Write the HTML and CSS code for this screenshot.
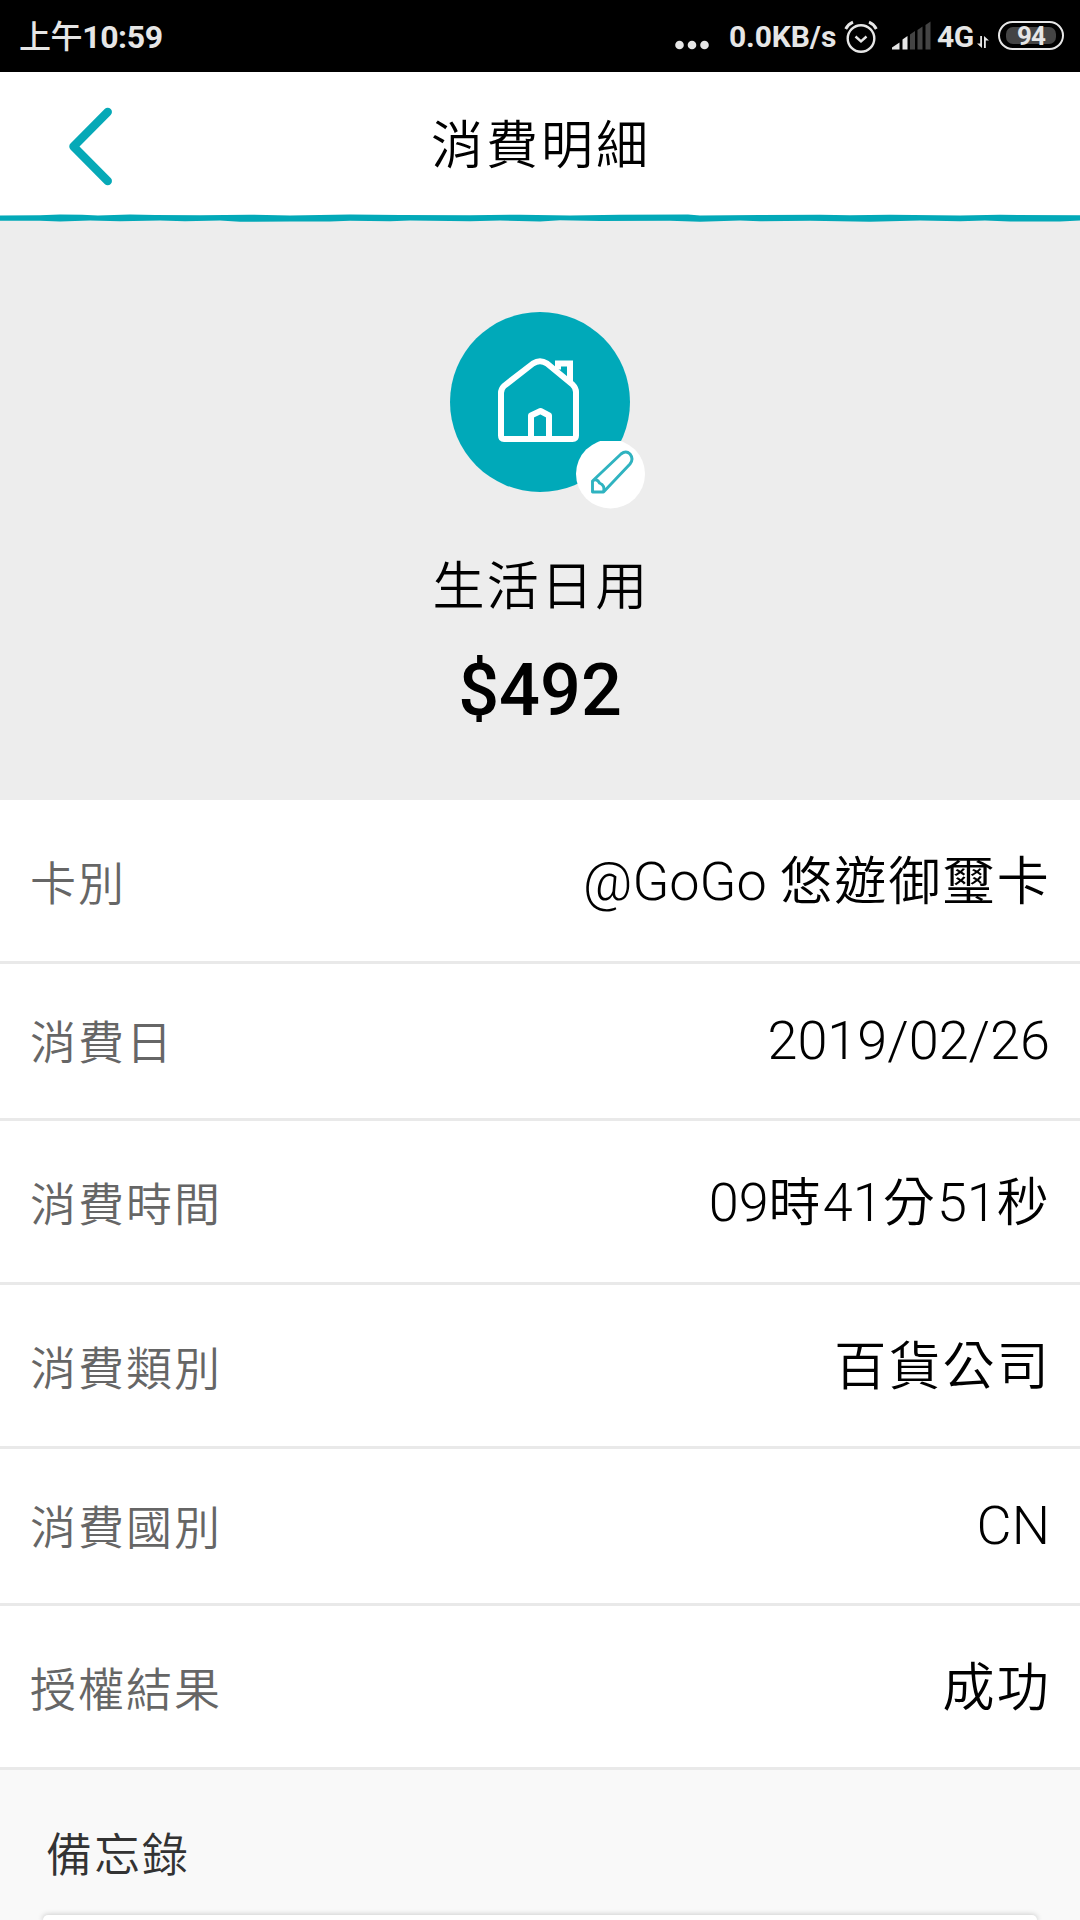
FILE: index.html
```html
<!DOCTYPE html>
<html lang="zh-Hant">
<head>
<meta charset="utf-8">
<title>消費明細</title>
<link rel="stylesheet" href="styles.css">
</head>
<body>
<div class="status">
  <span class="clock"><span class="meridiem">上午</span>10:59</span>
  <div class="status-right">
    <svg class="dots" width="34" height="10" viewBox="0 0 34 10"><circle cx="4.5" cy="5" r="4.3"/><circle cx="17" cy="5" r="4.3"/><circle cx="29.5" cy="5" r="4.3"/></svg>
    <span class="speed">0.0KB/s</span>
    <svg class="alarm" width="34" height="34" viewBox="0 0 34 34" fill="none" stroke="#e6e6e6"><circle cx="17" cy="18.5" r="13.3" stroke-width="2.4"/><path d="M11.5 16.5l5.5 5 5.500-5" stroke-width="2.4"/><path d="M1.700 9Q4.500 4 9 2.200M32.300 9Q29.500 4 25 2.200" stroke-width="3"/></svg>
    <svg class="signal" width="40" height="30" viewBox="0 0 40 30"><path d="M1 28.500V26.500L8.500 21.500V28.500z"/><path d="M11.500 18.500 16.500 15V28.500H11.500z"/><g fill="#444"><path d="M19 13.500 24 10V28.500H19z"/><path d="M26.500 9 31.500 5.500V28.500H26.500z"/><path d="M34.500 4 39.500 .5V28.500H34.500z"/></g></svg>
    <span class="network">4G</span>
    <svg class="updown" width="12" height="12" viewBox="0 0 12 12"><path d="M3.200 0H5V12L0 7.500H3.200zM7 12V0L12 4.500H8.800V12z"/></svg>
    <span class="battery"><span class="battery-level">94</span></span>
  </div>
</div>
<header class="header">
  <svg class="back" width="46" height="82" viewBox="0 0 46 82"><path d="M41.700 7 7.500 41.500 41.700 76" fill="none" stroke="#06a9b7" stroke-width="8.500" stroke-linecap="round" stroke-linejoin="round"/></svg>
  <h1 class="title">消費明細</h1>
</header>
<svg class="wave" width="1080" height="8" viewBox="0 0 1080 8"><path d="M0 1.500 40 1.300 60 .6 82 .8 98 1.500 130 .6 155 1 200 1.300 250 .7 290 1.400 350 .6 400 1 470 1.300 520 .7 570 1.500 620 .8 688 .6 700 1.500 760 1 820 .7 850 1.300 890 .8 960 1.400 1000 .8 1080 1.200V6.500L1060 7.600 1010 7.600 985 6.400 960 7.200 920 6.500 870 7.700 810 6.700 760 7.200 740 6.500 700 7.700 670 6.800 600 7 560 6.300 540 7.500 500 6.500 470 7.200 410 6.500 390 7.300 350 6.800 330 7.500 290 7.600 240 7.700 220 6.500 185 7.300 160 6.400 120 7.200 90 6.500 60 7.600 40 6.800 0 6.800z" fill="#03a9b8"/></svg>
<section class="hero">
  <div class="category">
    <svg class="house" width="180" height="180" viewBox="0 0 180 180" fill="none" stroke="#fff" stroke-width="6" stroke-linejoin="round"><circle cx="90" cy="90" r="90" fill="#00a9b9" stroke="none"/><path d="M54 127Q51 127 51 123.500V81Q51 77 54 74L83 51.500Q90 47 97 51.500L122.500 72.500Q126 76 126 80V123.500Q126 127 122.500 127z"/><path d="M81 127V103.500L90.500 99 99 103.500V127"/><path d="M108 57.500V51.500H120V69.500" stroke-linejoin="miter"/></svg>
    <svg class="edit" width="70" height="69" viewBox="0 0 70 69"><circle cx="34.500" cy="33" r="34.500" fill="#fff"/><path d="M16.500 51V40L45 13Q50 9 54 13 58 18 54 23L27.500 51zM16.500 40Q21 37 23.500 42 29.500 44.500 27.500 51" fill="none" stroke="#2fb3c0" stroke-width="2.900" stroke-linejoin="round"/></svg>
  </div>
  <div class="category-name">生活日用</div>
  <div class="amount">$492</div>
</section>
<dl class="details">
  <div class="row"><dt>卡別</dt><dd>@GoGo <span class="han">悠遊御璽卡</span></dd></div>
  <div class="row latin"><dt>消費日</dt><dd>2019/02/26</dd></div>
  <div class="row"><dt>消費時間</dt><dd>09<span class="han">時</span>41<span class="han">分</span>51<span class="han">秒</span></dd></div>
  <div class="row"><dt>消費類別</dt><dd><span class="han">百貨公司</span></dd></div>
  <div class="row latin"><dt>消費國別</dt><dd>CN</dd></div>
  <div class="row"><dt>授權結果</dt><dd><span class="han">成功</span></dd></div>
</dl>
<section class="memo">
  <h2 class="memo-title">備忘錄</h2>
  <div class="memo-box"></div>
</section>
</body>
</html>
```
FILE: styles.css
```css
* { box-sizing: border-box; margin: 0; padding: 0; }
body {
  width: 1080px;
  height: 1920px;
  overflow: hidden;
  display: flex;
  flex-direction: column;
  background: #fff;
  color: #000;
  font-family: Roboto, "Noto Sans CJK TC", sans-serif;
  font-weight: 350;
}
svg { display: block; flex: none; }
.status {
  flex: none;
  height: 72px;
  padding: 0 16px 0 19px;
  display: flex;
  justify-content: space-between;
  background: #000;
  color: #e6e6e6;
  fill: #e6e6e6;
  font-weight: 700;
}
.clock { font-size: 32px; line-height: 74px; letter-spacing: -0.4px; }
.meridiem { font-weight: 500; }
.status-right { display: flex; align-items: flex-start; }
.dots { margin: 40px 20px 0 0; }
.speed { width: 109px; font-size: 30px; line-height: 73px; letter-spacing: -0.1px; white-space: nowrap; }
.alarm { margin: 20px 13px 0 6px; }
.signal { margin: 21px 6px 0 0; }
.network { width: 39px; font-size: 30px; line-height: 73px; letter-spacing: -0.5px; }
.updown { margin: 36px 9px 0 1px; }
.battery {
  width: 66px;
  height: 29px;
  margin-top: 21px;
  padding: 4px 6px;
  border: 2px solid #e6e6e6;
  border-radius: 15px;
  display: flex;
}
.battery-level {
  flex: 1;
  border-radius: 7px;
  background: #444;
  font-size: 26px;
  line-height: 18px;
  text-align: center;
  letter-spacing: -1px;
}
.header {
  flex: none;
  height: 142px;
  padding: 33px 66px;
  display: grid;
  grid-template-columns: 46px 1fr 46px;
}
.title { padding-left: 2px; font-size: 52px; font-weight: 350; line-height: 83px; letter-spacing: 3px; text-align: center; }
.wave { background: linear-gradient(#fff 50%, #ededed 50%); }
.hero {
  flex: none;
  height: 578px;
  padding-top: 90px;
  display: flex;
  flex-direction: column;
  align-items: center;
  background: #ededed;
}
.category { position: relative; height: 180px; }
.edit { position: absolute; left: 126px; top: 129px; }
.category-name { margin-top: 55px; padding-left: 2px; font-size: 52px; line-height: 81px; letter-spacing: 2.3px; }
.amount { margin-top: 20px; font-size: 72px; font-weight: 500; line-height: 86px; }
.details { flex: none; }
.row {
  height: 164px;
  padding: 1px 30px 0 30px;
  display: flex;
  justify-content: space-between;
  align-items: baseline;
  border-bottom: 3px solid #e9e9e9;
}
.row.latin { height: 157px; padding-top: 0; }
.row dt { font-size: 46px; letter-spacing: 2px; color: #666; }
.row dd { font-size: 54px; font-weight: 300; line-height: 161px; white-space: nowrap; }
.row.latin dd { line-height: 154px; }
.han { font-size: 52px; font-weight: 350; letter-spacing: 2.2px; }
.han:last-child { margin-right: -1px; }
.memo { flex: 1; min-height: 0; padding: 48px 43px 0; display: flex; flex-direction: column; background: #f9f9f9; }
.memo-title { padding-left: 3px; font-size: 46px; font-weight: 350; line-height: 74px; letter-spacing: 2px; color: #333; }
.memo-box {
  flex: 1;
  margin-top: 23px;
  border-radius: 20px 20px 0 0;
  background: #fff;
  box-shadow: 0 0 5px 1px rgba(0, 0, 0, 0.17);
}
```
